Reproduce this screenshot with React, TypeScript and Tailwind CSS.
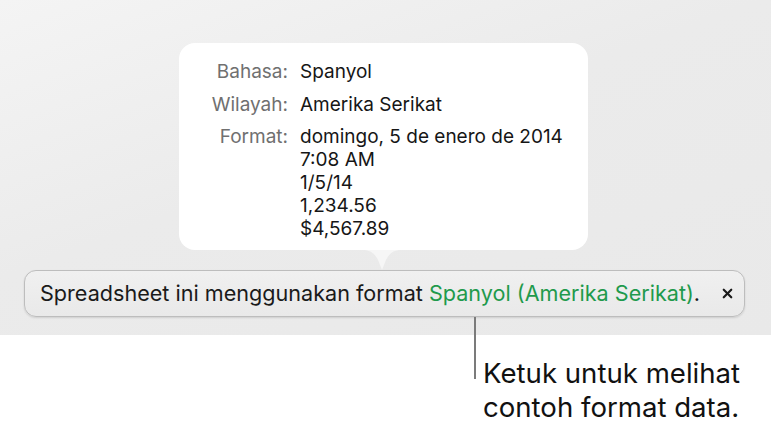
import { X } from "lucide-react";

const rows = [
  { label: "Bahasa:", values: ["Spanyol"] },
  { label: "Wilayah:", values: ["Amerika Serikat"] },
  {
    label: "Format:",
    values: ["domingo, 5 de enero de 2014", "7:08 AM", "1/5/14", "1,234.56", "$4,567.89"],
  },
];

export default function App() {
  return (
    <div className="relative w-[771px] h-[436px] bg-white overflow-hidden font-['Inter',sans-serif]">
      {/* grey app area */}
      <div className="h-[335px] pt-[43px] bg-[linear-gradient(160deg,#f4f4f4_0%,#ebebeb_45%,#e9e9e9_100%)]">
        {/* popover */}
        <div className="relative ml-[179px] w-[409px] h-[207px] rounded-[16px] bg-white pt-[17px]">
          <div className="flex flex-col gap-[9.5px]">
            {rows.map((row) => (
              <div key={row.label} className="flex text-[19px] leading-[23px]">
                <div className="w-[109px] text-right text-[#707070]">{row.label}</div>
                <div className="ml-[12px] flex flex-col text-[#161616]">
                  {row.values.map((v) => (
                    <span key={v}>{v}</span>
                  ))}
                </div>
              </div>
            ))}
          </div>
          <svg
            className="absolute left-[184px] top-[207px]"
            width="38"
            height="20"
            viewBox="0 0 38 20"
          >
            <path d="M0 0 C8 0 12 4 15 10 L19 20 L23 10 C26 4 30 0 38 0 Z" fill="#f6f6f6" />
          </svg>
        </div>

        {/* banner */}
        <div className="mt-[20px] ml-[24px] w-[721px] h-[47px] rounded-[12px] border border-[#bdbdbd] bg-[linear-gradient(180deg,#f0f0f0,#e9e9e9)] shadow-[0_1px_2px_rgba(0,0,0,0.12)] flex items-center pl-[15px] text-[21.6px] text-[#1a1a1a]">
          <span>
            Spreadsheet ini menggunakan format{" "}
            <span className="text-[#1f9a4c]">Spanyol (Amerika Serikat)</span>.
          </span>
          <X className="ml-[20px] w-[15px] h-[15px]" strokeWidth={3.5} />
        </div>
      </div>

      {/* callout */}
      <div className="relative -mt-[18px] ml-[474px] flex">
        <div className="w-[2px] h-[62px] bg-[#7b7b7b]" />
        <div className="ml-[7px] mt-[39px] text-[27.6px] leading-[34px] text-[#111]">
          Ketuk untuk melihat
          <br />
          contoh format data.
        </div>
      </div>
    </div>
  );
}
